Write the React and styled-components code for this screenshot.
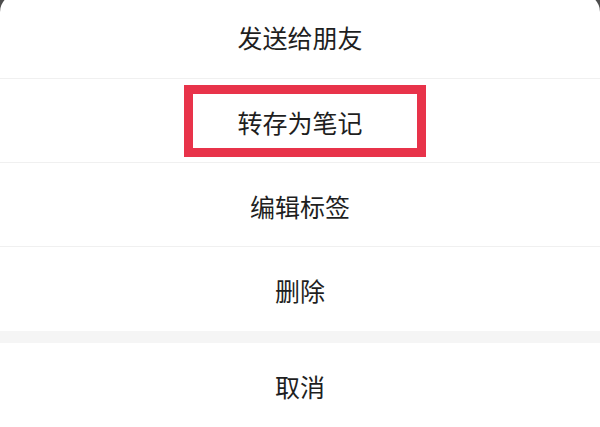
import React from "react";
import styled, { createGlobalStyle } from "styled-components";

const GlobalStyle = createGlobalStyle`
  html, body {
    margin: 0;
    padding: 0;
    background: #4d4d4d;
    overflow: hidden;
  }
  body {
    font-family: "Noto Sans CJK SC", "Noto Sans", sans-serif;
  }
`;

// bottom sheet, its top edge sits a few px above the viewport
const Sheet = styled.div`
  width: 600px;
  margin-top: -6px;
  background: #ffffff;
  border-radius: 18px 18px 0 0;
  overflow: hidden;
`;

const Group = styled.div`
  display: flex;
  flex-direction: column;
`;

const Item = styled.div`
  position: relative;
  height: ${(p) => (p.$first ? 85 : 84)}px;
  display: flex;
  align-items: center;
  justify-content: center;
  font-size: 25px;
  color: #1f1f1f;
  padding-top: 2px;
  box-sizing: border-box;
  border-bottom: ${(p) => (p.$last ? "none" : "1px solid #f0f0f0")};
`;

const Spacer = styled.div`
  height: 12px;
  background: #f5f5f5;
`;

// red annotation frame drawn over the second option
const Highlight = styled.div`
  position: absolute;
  left: 184px;
  top: 6px;
  width: 242px;
  height: 72px;
  box-sizing: border-box;
  border: 9px solid #e8334a;
  pointer-events: none;
`;

const items = ["发送给朋友", "转存为笔记", "编辑标签", "删除"];

export default function App() {
  return (
    <>
      <GlobalStyle />
      <Sheet>
        <Group>
          {items.map((label, i) => (
            <Item key={label} $first={i === 0} $last={i === items.length - 1}>
              {label}
              {i === 1 && <Highlight />}
            </Item>
          ))}
        </Group>
        <Spacer />
        <Item $last>取消</Item>
      </Sheet>
    </>
  );
}
